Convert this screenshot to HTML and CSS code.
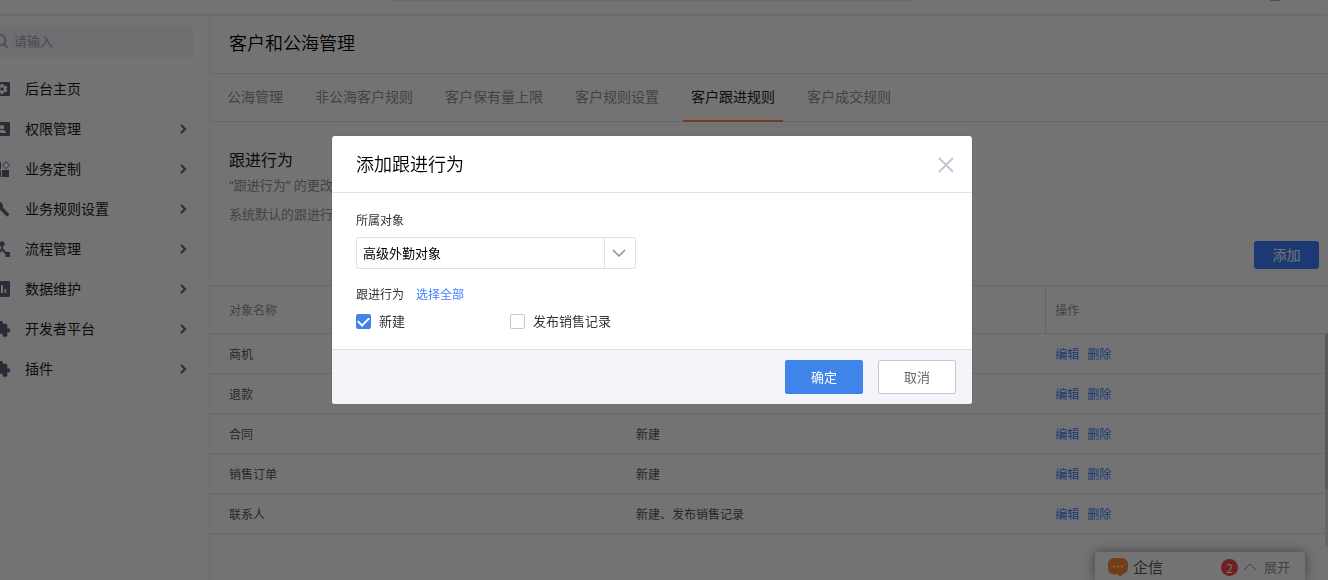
FILE: index.html
```html
<!DOCTYPE html>
<html lang="zh-CN">
<head>
<meta charset="utf-8">
<meta name="viewport" content="width=device-width, initial-scale=1">
<title>客户和公海管理</title>
<link rel="stylesheet" href="styles.css">
</head>
<body>
<div class="app">
  <header class="topbar">
    <div class="topbar-search"></div>
    <div class="topbar-avatar"></div>
  </header>
  <div class="layout">
    <aside class="sidebar">
      <label class="search">
        <svg class="search-icon" viewBox="0 0 16 16" aria-hidden="true"><circle cx="7" cy="7" r="6"/><path d="M11 11l4.500 4.500"/></svg>
        <input class="search-input" type="text" placeholder="请输入" aria-label="搜索">
      </label>
      <nav class="menu">
        <a class="menu-item" href="#">
          <svg class="menu-icon" viewBox="0 0 16 16" aria-hidden="true"><path fill-rule="evenodd" d="M1.500 1h13A1.500 1.500 0 0 1 16 2.500v11a1.500 1.500 0 0 1-1.500 1.500h-13A1.500 1.500 0 0 1 0 13.500v-11A1.500 1.500 0 0 1 1.500 1zM6.700 3l-.3 1.600-1 .6-1.500-.6-1.300 2.200L3.800 8l-1.200 1.200 1.300 2.200 1.500-.6 1 .6.300 1.600h2.600l.3-1.600 1-.6 1.500.6 1.300-2.200L12.200 8l1.200-1.200-1.300-2.200-1.500.6-1-.6L9.300 3zM8 6.300a1.700 1.700 0 1 1 0 3.400 1.700 1.700 0 0 1 0-3.400z"/></svg>
          <span class="menu-text">后台主页</span>
        </a>
        <a class="menu-item" href="#">
          <svg class="menu-icon" viewBox="0 0 16 16" aria-hidden="true"><path fill-rule="evenodd" d="M1.500 1h13A1.500 1.500 0 0 1 16 2.500v11a1.500 1.500 0 0 1-1.500 1.500h-13A1.500 1.500 0 0 1 0 13.500v-11A1.500 1.500 0 0 1 1.500 1zM8 4a2.200 2.200 0 1 0 0 4.400A2.200 2.200 0 0 0 8 4zM4 12h8v-1c0-1.500-2.500-2-4-2s-4 .5-4 2z"/></svg>
          <span class="menu-text">权限管理</span>
          <svg class="chevron" viewBox="0 0 8 10" aria-hidden="true"><path d="M2 1l4 4-4 4"/></svg>
        </a>
        <a class="menu-item" href="#">
          <svg class="menu-icon" viewBox="0 0 16 16" aria-hidden="true"><path d="M0 1h7v7H0zM0 9h7v7H0zM8 9h7v7H8z"/><path class="menu-icon-line" d="M12 .7l3.500 3.500L12 7.700 8.500 4.200z"/></svg>
          <span class="menu-text">业务定制</span>
          <svg class="chevron" viewBox="0 0 8 10" aria-hidden="true"><path d="M2 1l4 4-4 4"/></svg>
        </a>
        <a class="menu-item" href="#">
          <svg class="menu-icon" viewBox="0 0 16 16" aria-hidden="true"><path d="M8.800 6.500c.5-1.700.2-3.300-1-4.500C6.500.7 4.500.4 3 1l2.500 2.600-2 2L1 3.200C.3 4.800.6 6.700 2 8c1.200 1.200 3 1.500 4.500 1l6 6.200c.3.300.8.300 1.100 0l1.300-1.300c.4-.3.400-.8 0-1.100z"/></svg>
          <span class="menu-text">业务规则设置</span>
          <svg class="chevron" viewBox="0 0 8 10" aria-hidden="true"><path d="M2 1l4 4-4 4"/></svg>
        </a>
        <a class="menu-item" href="#">
          <svg class="menu-icon" viewBox="0 0 16 16" aria-hidden="true"><path d="M11 11h5v5h-4.500v-2.800L8 9.700l-3.500 3.500V16H0v-5h3.700L7.200 7.500V5.400a2.600 2.600 0 1 1 1.800 0v2.100l3 3.500z"/></svg>
          <span class="menu-text">流程管理</span>
          <svg class="chevron" viewBox="0 0 8 10" aria-hidden="true"><path d="M2 1l4 4-4 4"/></svg>
        </a>
        <a class="menu-item" href="#">
          <svg class="menu-icon" viewBox="0 0 16 16" aria-hidden="true"><path fill-rule="evenodd" d="M1.500 0h13A1.500 1.500 0 0 1 16 1.500v13a1.500 1.500 0 0 1-1.500 1.500h-13A1.500 1.500 0 0 1 0 14.500v-13A1.500 1.500 0 0 1 1.500 0zM3.500 6v6h1.700V6zM7 4v8h2V4zM10.500 8v4h1.700V8z"/></svg>
          <span class="menu-text">数据维护</span>
          <svg class="chevron" viewBox="0 0 8 10" aria-hidden="true"><path d="M2 1l4 4-4 4"/></svg>
        </a>
        <a class="menu-item" href="#">
          <svg class="menu-icon" viewBox="0 0 16 16" aria-hidden="true"><path d="M14.500 7.500h-1.200V4.200c0-.8-.6-1.400-1.400-1.400H8.800V1.700a1.900 1.900 0 0 0-3.800 0v1.100H1.800C1 2.800.4 3.400.4 4.200v3h1.200a2 2 0 0 1 0 4H.4v3.200c0 .8.6 1.400 1.400 1.400h3v-1.200a2 2 0 0 1 4 0v1.200h3.100c.8 0 1.400-.6 1.400-1.400v-3.100h1.200a1.900 1.900 0 0 0 0-3.800z"/></svg>
          <span class="menu-text">开发者平台</span>
          <svg class="chevron" viewBox="0 0 8 10" aria-hidden="true"><path d="M2 1l4 4-4 4"/></svg>
        </a>
        <a class="menu-item" href="#">
          <svg class="menu-icon" viewBox="0 0 16 16" aria-hidden="true"><path d="M14.500 7.500h-1.200V4.200c0-.8-.6-1.400-1.400-1.400H8.800V1.700a1.900 1.900 0 0 0-3.800 0v1.100H1.800C1 2.800.4 3.400.4 4.200v3h1.200a2 2 0 0 1 0 4H.4v3.200c0 .8.6 1.400 1.400 1.400h3v-1.200a2 2 0 0 1 4 0v1.200h3.100c.8 0 1.400-.6 1.400-1.400v-3.100h1.200a1.900 1.900 0 0 0 0-3.800z"/></svg>
          <span class="menu-text">插件</span>
          <svg class="chevron" viewBox="0 0 8 10" aria-hidden="true"><path d="M2 1l4 4-4 4"/></svg>
        </a>
      </nav>
    </aside>
    <main class="main">
      <h1 class="page-title">客户和公海管理</h1>
      <nav class="tabs">
        <a class="tab" href="#">公海管理</a>
        <a class="tab" href="#">非公海客户规则</a>
        <a class="tab" href="#">客户保有量上限</a>
        <a class="tab" href="#">客户规则设置</a>
        <a class="tab tab-active" href="#" aria-current="page">客户跟进规则</a>
        <a class="tab" href="#">客户成交规则</a>
      </nav>
      <section class="intro">
        <h2 class="intro-title">跟进行为</h2>
        <p class="intro-text">“跟进行为” 的更改</p>
        <p class="intro-text">系统默认的跟进行为</p>
      </section>
      <div class="toolbar"><button class="add-button" type="button">添加</button></div>
      <div class="table-wrap">
        <table class="table">
          <colgroup><col class="col-name"><col class="col-action"><col class="col-ops"></colgroup>
          <thead><tr><th>对象名称</th><th>跟进行为</th><th class="ops">操作</th></tr></thead>
          <tbody>
            <tr><td>商机</td><td>新建</td><td class="ops"><a href="#">编辑</a><a href="#">删除</a></td></tr>
            <tr><td>退款</td><td>新建</td><td class="ops"><a href="#">编辑</a><a href="#">删除</a></td></tr>
            <tr><td>合同</td><td>新建</td><td class="ops"><a href="#">编辑</a><a href="#">删除</a></td></tr>
            <tr><td>销售订单</td><td>新建</td><td class="ops"><a href="#">编辑</a><a href="#">删除</a></td></tr>
            <tr><td>联系人</td><td>新建、发布销售记录</td><td class="ops"><a href="#">编辑</a><a href="#">删除</a></td></tr>
          </tbody>
        </table>
        <div class="scrollbar"><div class="scrollbar-thumb"></div></div>
      </div>
    </main>
  </div>
</div>

<div class="chat">
  <svg class="chat-icon" viewBox="0 0 20 20" aria-hidden="true"><path class="chat-bubble" d="M6 1h8a6 6 0 0 1 6 6v4a6 6 0 0 1-5 6l-3.500 3-1-2.500H6a6 6 0 0 1-6-6V7a6 6 0 0 1 6-6z"/><circle cx="6" cy="9.500" r="1"/><circle cx="10" cy="9.500" r="1"/><circle cx="14" cy="9.500" r="1"/></svg>
  <span class="chat-name">企信</span>
  <span class="chat-count">2</span>
  <svg class="chat-arrow" viewBox="0 0 14 8" aria-hidden="true"><path d="M1 7l6-6 6 6"/></svg>
  <span class="chat-toggle">展开</span>
</div>

<div class="overlay">
  <form class="dialog" role="dialog" aria-labelledby="dialog-title">
    <header class="dialog-head">
      <h2 class="dialog-title" id="dialog-title">添加跟进行为</h2>
      <button class="close" type="button" aria-label="关闭"><svg viewBox="0 0 16 16" aria-hidden="true"><path d="M1 1l14 14M15 1L1 15"/></svg></button>
    </header>
    <div class="dialog-body">
      <label class="field-label" for="object">所属对象</label>
      <div class="select">
        <select class="select-input" id="object"><option>高级外勤对象</option></select>
        <svg class="select-arrow" viewBox="0 0 14 8" aria-hidden="true"><path d="M1 1l6 6 6-6"/></svg>
      </div>
      <div class="field-row"><span class="field-label">跟进行为</span><a class="select-all" href="#">选择全部</a></div>
      <div class="checks">
        <label class="check"><input type="checkbox" checked><span class="check-text">新建</span></label>
        <label class="check"><input type="checkbox"><span class="check-text">发布销售记录</span></label>
      </div>
    </div>
    <footer class="dialog-foot">
      <button class="button button-primary" type="submit">确定</button>
      <button class="button" type="button">取消</button>
    </footer>
  </form>
</div>
</body>
</html>
```
FILE: styles.css
```css
* { box-sizing: border-box; }
html, body { height: 100%; }
body {
  margin: 0;
  overflow: hidden;
  background: #fff;
  color: #181c25;
  font-family: "Noto Sans CJK SC", sans-serif;
  font-weight: 400;
  font-size: 12px;
}
h1, h2, p { margin: 0; font-weight: 350; }
a { text-decoration: none; }
button, input, select { font: inherit; }
svg { display: block; fill: none; flex: none; }

/* The app frame is scrolled 24px to the right */
.app { margin-left: -24px; min-height: 100%; display: flex; flex-direction: column; }
.topbar {
  height: 14px;
  display: flex;
  justify-content: flex-end;
  gap: 359px;
  padding-right: 48px;
  box-shadow: 0 0 3px rgba(0, 0, 0, .25);
}
.topbar-search { width: 518px; height: 1px; background: #eaebee; }
.topbar-avatar { width: 10px; height: 1px; background: #b4b4b4; border-radius: 0 0 5px 5px; }
.layout { flex: 1; display: flex; }

.sidebar { width: 234px; flex: none; padding: 11px 16px 0 18px; border-right: 1px solid #f0f0f0; }
.search {
  display: flex;
  align-items: center;
  gap: 6px;
  height: 32px;
  background: #f0f3f9;
  border-radius: 3px;
}
.search-icon { width: 14px; height: 14px; stroke: #a5a9b3; stroke-width: 2; }
.search-input { flex: 1; min-width: 0; height: 30px; padding: 0 0 2px; border: 0; background: none; font-size: 13px; outline: 0; }
.search-input::placeholder { color: #a5a9b3; opacity: 1; }
.menu { padding-top: 12px; }
.menu-item { display: flex; align-items: center; height: 40px; gap: 15px; padding-right: 6px; color: #181c25; font-size: 14px; }
.menu-icon { width: 16px; height: 16px; fill: #5f6479; }
.menu-icon-line { fill: none; stroke: #5f6479; stroke-width: 1; }
.menu-text { flex: 1; padding-bottom: 2px; }
.chevron { width: 8px; height: 10px; stroke: #5f6479; stroke-width: 2; }

.main { flex: 1; min-width: 0; }
.page-title { padding: 0 19px 2px; color: #000; font-size: 18px; line-height: 57px; border-bottom: 1px solid #e9e9ec; }
.tabs { display: flex; gap: 16px; height: 48px; padding-left: 9px; border-bottom: 1px solid #e9e9ec; }
.tab { height: 48px; padding: 0 8px; line-height: 44px; font-size: 14px; color: #91959e; }
.tab-active { color: #181c25; border-bottom: 2px solid #ff8837; }
.intro { padding: 25px 19px 0; }
.intro-title { font-size: 16px; line-height: 24px; font-weight: 400; }
.intro-text { font-family: "Noto Sans", "Noto Sans CJK SC", sans-serif; font-weight: 400; font-size: 13px; line-height: 29px; color: #91959e; }
.toolbar { display: flex; justify-content: flex-end; padding: 12px 9px 16px; }
.add-button { width: 65px; height: 28px; padding: 0 0 2px; border: 0; border-radius: 3px; background: #3f7fff; color: #fff; font-size: 14px; line-height: 26px; }

.table-wrap { position: relative; }
.table { width: 100%; table-layout: fixed; border-collapse: separate; border-spacing: 0; border-top: 1px solid #e3e3e6; color: #545861; }
.col-name { width: 36.4%; }
.col-action { width: 38.3%; }
.table th, .table td { height: 40px; padding: 0 19px 1px; text-align: left; font-weight: inherit; border-bottom: 1px solid #e3e3e6; }
.table th { height: 48px; color: #91959e; }
.table .ops { padding-left: 10px; }
.table th.ops { padding-left: 9px; border-left: 1px solid #e3e3e6; }
.ops a { color: #3f7fff; margin-right: 8px; }
.scrollbar { position: absolute; top: 49px; right: 0; width: 3px; height: 213px; background: #e3e3ea; }
.scrollbar-thumb { height: 156px; background: #c1c5ce; }

.chat {
  position: absolute;
  right: 23px;
  bottom: 0;
  display: flex;
  align-items: center;
  width: 210px;
  height: 28px;
  padding: 2px 15px 0 13px;
  background: #fff;
  border-radius: 4px 4px 0 0;
  box-shadow: 0 0 12px rgba(0, 0, 0, .45);
  font-size: 15px;
}
.chat-icon { width: 20px; height: 20px; fill: #fff; }
.chat-bubble { fill: #ff8837; }
.chat-name { flex: 1; padding: 0 0 1px 5px; color: #545861; }
.chat-count { width: 17px; height: 17px; border-radius: 50%; background: #f5474c; color: #fff; text-align: center; font-size: 12px; line-height: 17px; }
.chat-arrow { width: 14px; height: 8px; margin: 0 7px 0 5px; stroke: #91959e; }
.chat-toggle { padding-bottom: 2px; font-size: 13px; color: #91959e; }

.overlay {
  position: fixed;
  inset: 0 0 0 -24px;
  display: flex;
  justify-content: center;
  align-items: flex-start;
  padding-top: 136px;
  background: rgba(0, 0, 0, .55);
}
.dialog { width: 640px; background: #fff; border-radius: 3px; overflow: hidden; box-shadow: 0 0 2px rgba(0, 0, 0, .2); }
.dialog-head { display: flex; align-items: center; justify-content: space-between; height: 57px; padding: 0 18px 0 24px; border-bottom: 1px solid #dee1e8; }
.dialog-title { padding-bottom: 2px; color: #000; font-size: 18px; line-height: 54px; }
.close { padding: 0; border: 0; background: none; }
.close svg { width: 16px; height: 16px; margin-top: 2px; stroke: #c1c9d6; stroke-width: 2; }
.dialog-body { padding: 17px 24px 18px; color: #333; }
.field-label { display: block; line-height: 20px; }
.select { position: relative; width: 280px; margin: 7px 0 15px; }
.select-input {
  display: block;
  width: 100%;
  height: 32px;
  padding: 0 38px 2px 6px;
  border: 1px solid #dee1e8;
  border-radius: 2px;
  background: linear-gradient(#dee1e8, #dee1e8) right 30px top / 1px 100% no-repeat #fff;
  color: #000;
  font-size: 13px;
  appearance: none;
}
.select-arrow { position: absolute; right: 10px; top: 12px; width: 14px; height: 8px; stroke: #868d9c; stroke-width: 1.500; pointer-events: none; }
.field-row { display: flex; gap: 12px; }
.select-all { color: #3f7fff; line-height: 20px; }
.checks { display: flex; padding-top: 7px; }
.check { display: flex; align-items: center; gap: 8px; width: 154px; height: 20px; font-size: 13px; }
.check-text { padding-bottom: 2px; }
.check input { appearance: none; width: 15px; height: 15px; margin: 0; border: 1px solid #c8c8c8; border-radius: 2px; display: grid; place-items: center; }
.check input:checked { background: #3e84e9; border-color: #3e84e9; }
.check input:checked::before { content: ""; width: 9px; height: 5px; margin-bottom: 2px; border: solid #fff; border-width: 0 0 2px 2px; transform: rotate(-45deg); }
.dialog-foot { display: flex; justify-content: flex-end; gap: 15px; padding: 10px 16px; background: #f4f5fa; border-top: 1px solid #dee1e8; }
.button { width: 78px; height: 34px; padding: 0 0 2px; border: 1px solid #c8c8c8; border-radius: 2px; background: #fff; color: #666; font-size: 13px; }
.button-primary { border-color: #3e84e9; background: #3e84e9; color: #fff; }
```
